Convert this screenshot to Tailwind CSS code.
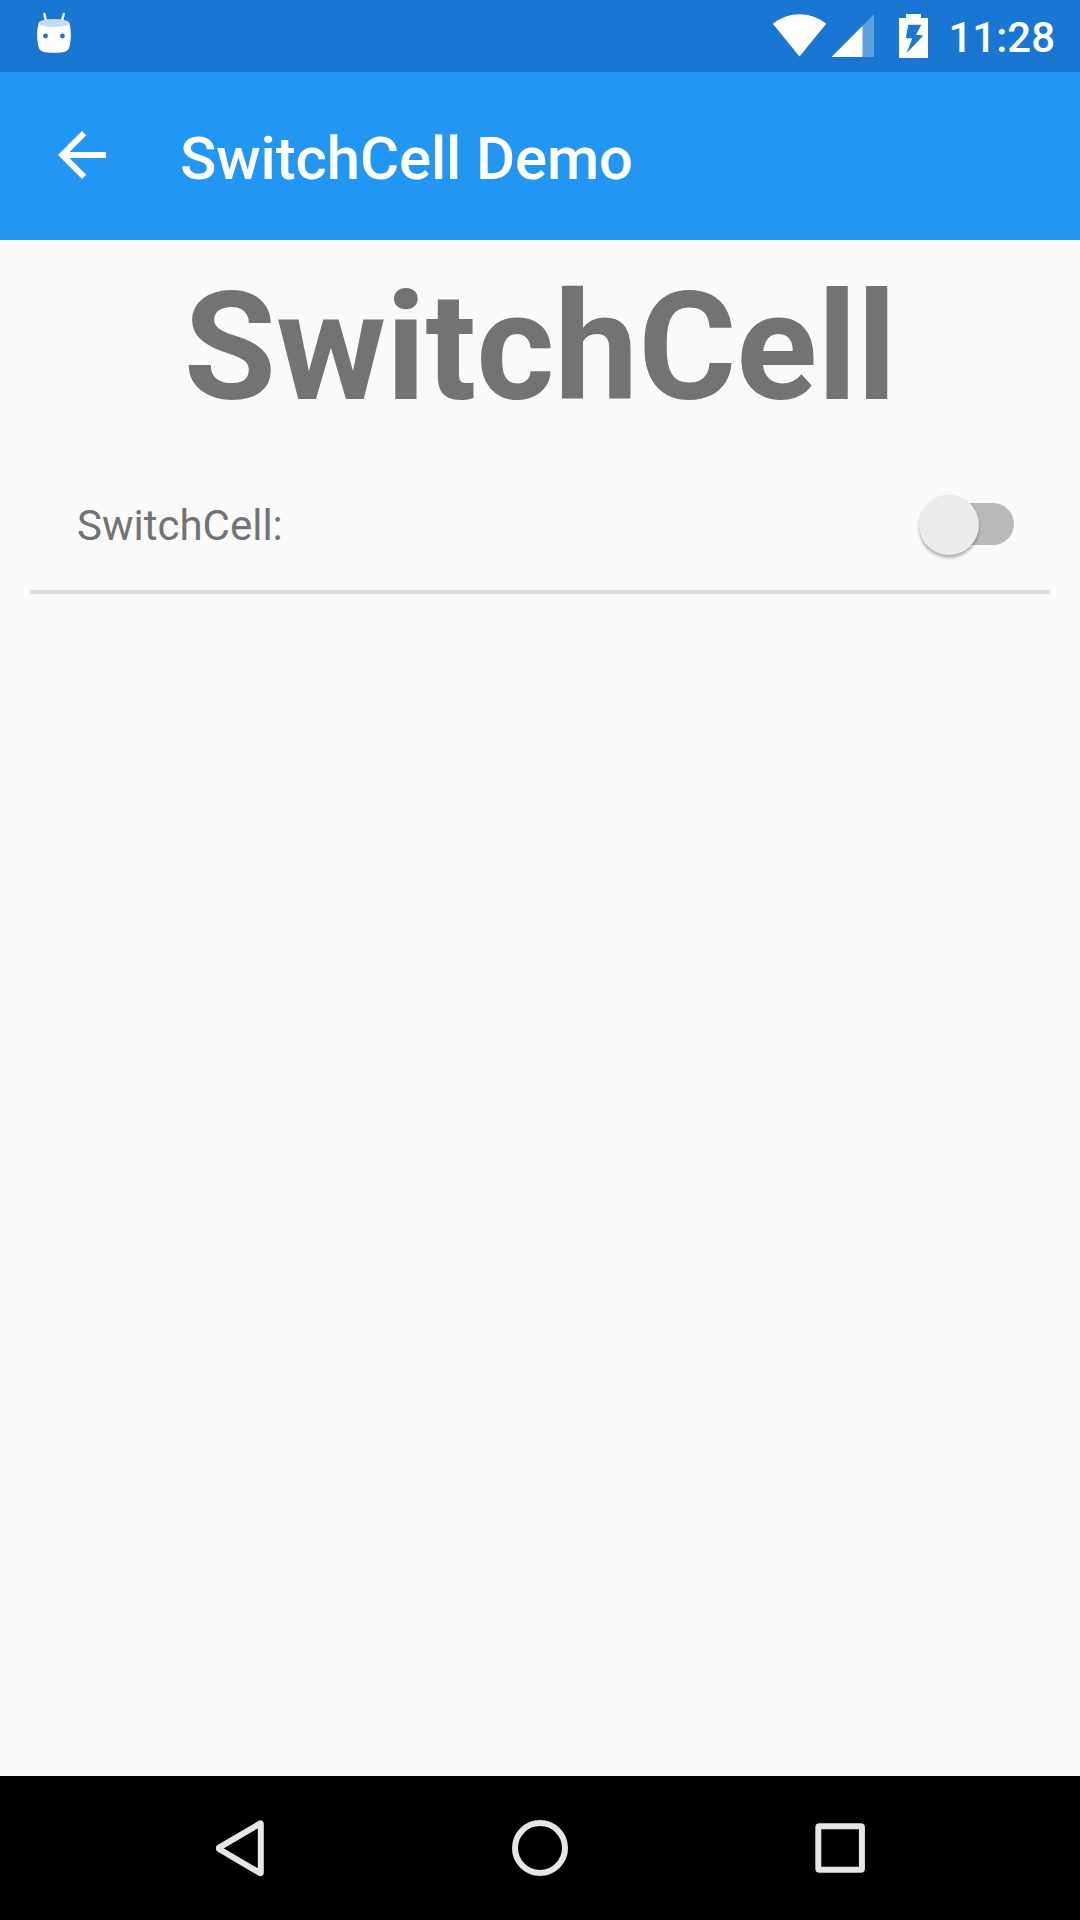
<!DOCTYPE html>
<html lang="en">
<head>
<meta charset="utf-8">
<title>SwitchCell Demo</title>
<script src="https://cdn.jsdelivr.net/npm/@tailwindcss/browser@4"></script>
</head>
<body class="flex h-[1920px] w-[1080px] flex-col overflow-hidden bg-[#fafafa] font-['Roboto',sans-serif] text-[#737373]">
  <!-- Status bar -->
  <div class="flex h-[72px] shrink-0 items-center justify-between bg-[#1976d2] pr-[25px] pl-[30px] text-white">
    <svg class="h-[72px] w-[48px]" viewBox="30 0 48 72" fill="none">
      <path d="M44.300 14l2 8M63.700 14l-2 8" stroke="#fff" stroke-width="2.400" stroke-linecap="round"/>
      <path d="M38.800 22.500C36.600 30 36.600 40 38.800 47.500C40 51.500 44 52.800 54 52.800S68 51.500 69.200 47.500C71.400 40 71.400 30 69.200 22.500Z" fill="#fff"/>
      <ellipse cx="54" cy="23" rx="15.400" ry="3.900" fill="#c6daf3"/>
      <circle cx="45.500" cy="36" r="2.400" fill="#1976d2"/>
      <circle cx="62.400" cy="36" r="2.400" fill="#1976d2"/>
    </svg>
    <div class="flex items-center">
      <svg class="h-[72px] w-[60px]" viewBox="770 0 60 72" fill="#fff">
        <path d="M772.800 23.800Q784.500 14.200 799.500 14.200T826.200 23.800L799.500 56.600Z"/>
      </svg>
      <svg class="h-[72px] w-[60px]" viewBox="830 0 60 72" fill="#fff">
        <path d="M874 14.300V57H831.500Z" fill-opacity=".3"/>
        <path d="M862.500 25.900V57H831.500Z"/>
      </svg>
      <svg class="h-[72px] w-[50px]" viewBox="890 0 50 72" fill="#fff">
        <path d="M906 14H921V18H928V58H899V18H906Z"/>
        <path d="M908.300 24.700H921.300L916 34.700L923.300 35.400L906.500 53.300L912.300 38.600L905.800 38Z" fill="#1976d2"/>
      </svg>
      <span class="w-[115px] pt-[3px] text-right text-[42px] leading-[48px] font-medium">11:28</span>
    </div>
  </div>

  <!-- App bar -->
  <header class="flex h-[168px] shrink-0 items-center bg-[#2196f3] pl-[46px] text-white">
    <svg class="mb-[2px] size-[72px]" viewBox="0 0 24 24" fill="currentColor">
      <path d="M20 11H7.830l5.590-5.590L12 4l-8 8 8 8 1.410-1.410L7.830 13H20v-2z"/>
    </svg>
    <h1 class="ml-[62px] pt-[5px] text-[60px] leading-[70px] font-medium tracking-[-0.15px]">SwitchCell Demo</h1>
  </header>

  <!-- Content -->
  <main class="flex grow flex-col px-[30px] pt-[20px]">
    <h2 class="text-center text-[150px] leading-[176px] font-bold tracking-[-0.1px]">SwitchCell</h2>
    <div class="mt-[26px] flex h-[132px] items-center justify-between border-b-4 border-[#dcdcdc] pr-[36px] pl-[47px]">
      <span class="text-[42px] leading-[48px]">SwitchCell:</span>
      <div class="mb-[4px] flex h-[42px] w-[96px] items-center rounded-full bg-[linear-gradient(to_right,transparent_20px,#b9b9b9_20px)]">
        <div class="mt-[1px] ml-[0.5px] size-[60px] shrink-0 rounded-full bg-[#ececec] shadow-[0_3px_3px_rgba(0,0,0,0.28),0_0_2px_rgba(0,0,0,0.08)]"></div>
      </div>
    </div>
  </main>

  <!-- Navigation bar -->
  <nav class="h-[144px] shrink-0 bg-black">
    <svg class="h-[144px] w-[1080px]" viewBox="0 1776 1080 144" fill="none" stroke="#e6e6e6" stroke-width="6" stroke-linejoin="round">
      <path d="M219 1847.600V1849L260.300 1873.200Q260.800 1873.300 260.800 1872.800V1823.800Q260.800 1823.200 260.300 1823.400Z"/>
      <circle cx="540" cy="1848" r="25"/>
      <rect x="818.300" y="1826.200" width="43.600" height="43.500" rx="1"/>
    </svg>
  </nav>
</body>
</html>
